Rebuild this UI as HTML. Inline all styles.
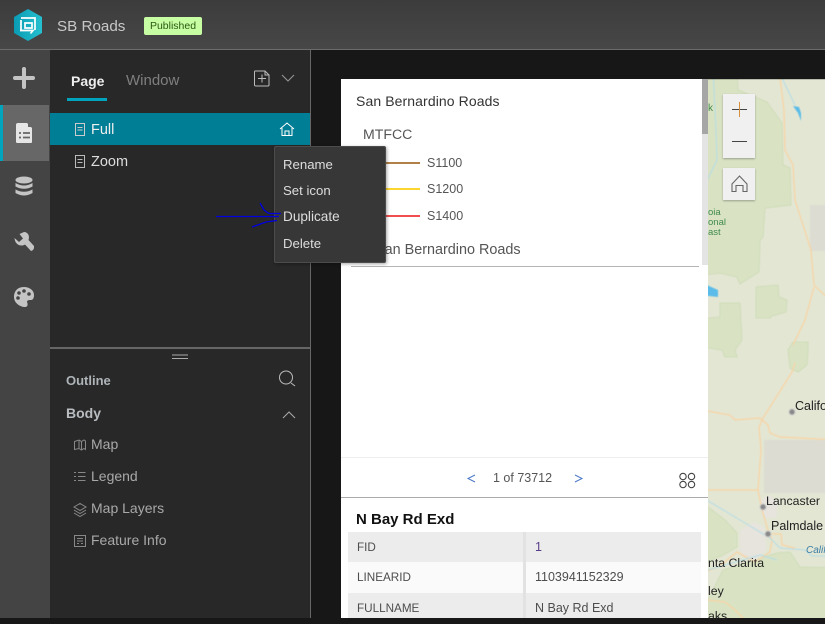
<!DOCTYPE html>
<html><head><meta charset="utf-8"><style>
html,body{margin:0;padding:0;background:#171717}
body{width:825px;height:618px;overflow:hidden;position:relative;font-family:"Liberation Sans",sans-serif}
div,span{position:absolute;white-space:nowrap}
svg{position:absolute;left:0;top:0}
.m{color:#ddd;font-size:13.2px;line-height:18px;left:283px}
.o{color:#a9a9a9;font-size:14px;line-height:18px;left:91px}
.k{color:#4d4d4d;font-size:11.700px;line-height:16px}
.v{color:#4d4d4d;font-size:12.500px;line-height:16px}
.ml{color:#222;font-size:12.300px;line-height:15px;filter:blur(.3px)}
</style></head><body>
<div style="left:0;top:0;width:825px;height:49px;background:linear-gradient(#3c3c3c,#474747)"></div>
<div style="left:0;top:49px;width:825px;height:1px;background:#6c6c6c"></div>
<div style="left:0;top:50px;width:50px;height:568px;background:#444"></div>
<div style="left:0;top:105px;width:49px;height:56px;background:#676767"></div>
<div style="left:0;top:105px;width:3px;height:56px;background:#00a5bd"></div>
<div style="left:50px;top:50px;width:260px;height:568px;background:#282828"></div>
<div style="left:310px;top:50px;width:1px;height:568px;background:#666"></div>
<div style="left:311px;top:50px;width:514px;height:568px;background:#171717"></div>

<!-- map -->
<div style="left:708px;top:79px;width:117px;height:539px;overflow:hidden">
<svg width="140" height="560" viewBox="700 79 140 560" style="left:-8px;top:0;filter:blur(.5px)">
<rect x="690" y="60" width="160" height="590" fill="#e3e6d3"/>
<g fill="#d9e3c4" stroke="#cfdcb8" stroke-width="1">
<path d="M690 70H737L738 90L767 102L782 123L783 165L790 168L791 205L765 208L763 237L760 240L759 272L740 284L737 277L720 273L690 277Z"/>
<path d="M756 287L778 285L779 297L787 300L786 312L772 316L770 318L756 318Z"/>
<path d="M690 320L720 317V303H740L742 340L735 350L737 357L725 357L722 350L690 345Z"/>
<path d="M793 342H808V350L807 365L798 372L790 368L788 350Z"/>
<path d="M690 495L708 507L725 520L737 533L737 547L723 555L690 570Z"/>
<path d="M690 640L708 600L723 570L777 553L790 552L800 567L840 568V640Z"/>
</g>
<rect x="810" y="205" width="30" height="46" fill="#dcdcd2"/>
<rect x="764" y="440" width="76" height="53" fill="#dcdcd2"/>
<path d="M740 530l14-8 10 5 3 22-12 12-15-8zM760 500l10-5 8 8-2 15-12 0z" fill="#e6e4dc"/>
<g fill="none" stroke="#f9d3a2" stroke-width="1.200">
<path d="M779 70L784 110L785 150L793 165L795 200L803 225L811 250L814 285L835 305"/>
<path d="M814 287L805 320L793 345"/>
<path d="M795 363L792 372L763 418L759 427L761 450L758 490L762 510L768 530L772 540L770 552L755 562L737 552L720 566L690 578"/>
<path d="M690 408L730 415L735 420L760 418L768 425L770 433L780 437L835 440"/>
<path d="M690 490H758"/>
<path d="M772 534H781L782 545L795 548"/>
<path d="M690 598L725 602L735 610L755 630"/>
</g>
<g fill="none" stroke="#b4dce8" stroke-width="1">
<path d="M778 70L795 105"/><path d="M713 70L716 130L717 160L700 195"/>
<path d="M690 490L740 520L770 538L780 548L805 550L812 556L835 556"/>
<path d="M690 575L760 555L777 560"/>
</g>
<path d="M793 106L799 107L801 113L801 121L798 113ZM700 282L718 290L718 297L700 295Z" fill="#5bbce9"/>
<circle cx="792" cy="412" r="3" fill="#888" stroke="#ccc"/><circle cx="763" cy="507" r="3" fill="#888" stroke="#ccc"/><circle cx="768" cy="534" r="3" fill="#888" stroke="#ccc"/>
</svg>
</div>
<div class="ml" style="left:795px;top:399px;font-size:12.500px">California</div>
<div class="ml" style="left:766px;top:494px">Lancaster</div>
<div class="ml" style="left:771px;top:519px;font-size:12.500px">Palmdale</div>
<div class="ml" style="left:806px;top:543px;font-size:10px;color:#3b7fa8;font-style:italic">Califo</div>
<div class="ml" style="left:708px;top:556px">nta Clarita</div>
<div class="ml" style="left:708px;top:584px">ley</div>
<div class="ml" style="left:708px;top:609px">aks</div>
<div class="ml" style="left:708px;top:101px;font-size:10px;color:#3f8a4a">k</div>
<div class="ml" style="left:708px;top:208px;font-size:9.500px;line-height:10px;color:#3f8a4a">oia<br>onal<br>ast</div>

<div style="left:723px;top:94px;width:32px;height:64px;background:#f0f0f0;box-shadow:0 1px 2px rgba(0,0,0,.3)"></div>
<div style="left:723px;top:168px;width:32px;height:32px;background:#f0f0f0;box-shadow:0 1px 2px rgba(0,0,0,.3)"></div>
<svg width="825" height="618" viewBox="0 0 825 618">
<path d="M732 109.500H747M732 141.500H747" stroke="#444" stroke-width="1"/>
<path d="M739.500 102V117" stroke="#d9903c" stroke-width="1"/>
<path d="M732 184L739.500 176L747 184V191.500H743V185.500H736V191.500H732Z" fill="none" stroke="#666" stroke-width="1.100"/>
</svg>

<!-- white page -->
<div style="left:341px;top:79px;width:367px;height:539px;background:#fff"></div>
<div style="left:702px;top:79px;width:6px;height:55px;background:#a6a6a6"></div>
<div style="left:702px;top:134px;width:6px;height:131px;background:#e4e4e4"></div>
<div style="left:356px;top:92px;font-size:14px;letter-spacing:.1px;line-height:18px;color:#333">San Bernardino Roads</div>
<div style="left:363px;top:125px;font-size:14.100px;line-height:18px;color:#555">MTFCC</div>
<div style="left:380px;top:162px;width:40px;height:2px;background:#b08048"></div>
<div style="left:380px;top:188px;width:40px;height:2px;background:#fcd52f"></div>
<div style="left:380px;top:215px;width:40px;height:2px;background:#ef4f4f"></div>
<div style="left:427px;top:154px;font-size:12.500px;line-height:18px;color:#555">S1100</div>
<div style="left:427px;top:180px;font-size:12.500px;line-height:18px;color:#555">S1200</div>
<div style="left:427px;top:207px;font-size:12.500px;line-height:18px;color:#555">S1400</div>
<div style="left:375px;top:241px;font-size:14.400px;line-height:18px;color:#555">San Bernardino Roads</div>
<div style="left:351px;top:266px;width:348px;height:1px;background:#b4b4b4"></div>
<div style="left:341px;top:457px;width:367px;height:1px;background:#eee"></div>
<div style="left:493px;top:469px;font-size:12.500px;line-height:18px;color:#555">1 of 73712</div>
<svg width="825" height="618" viewBox="0 0 825 618">
<path d="M475 475L468 478.500L475 482M575 475L582 478.500L575 482" fill="none" stroke="#4a78c8" stroke-width="1"/>
<g fill="none" stroke="#444" stroke-width="1.100"><circle cx="683" cy="476.500" r="3.200"/><circle cx="691.500" cy="476.500" r="3.200"/><circle cx="683" cy="484.500" r="3.200"/><circle cx="691.500" cy="484.500" r="3.200"/></g>
</svg>
<div style="left:341px;top:497px;width:367px;height:1px;background:#aaa"></div>
<div style="left:356px;top:510px;font-size:15px;font-weight:bold;line-height:19px;color:#111">N Bay Rd Exd</div>
<div style="left:348px;top:532px;width:353px;height:30px;background:#ececec"></div>
<div style="left:348px;top:562px;width:353px;height:31px;background:#fafafa"></div>
<div style="left:348px;top:593px;width:353px;height:25px;background:#ececec"></div>
<div style="left:523px;top:532px;width:3px;height:86px;background:#e2e2e2"></div>
<div class="k" style="left:357px;top:540px">FID</div><div class="v" style="left:535px;top:539px;color:#5a3d8a">1</div>
<div class="k" style="left:357px;top:570px">LINEARID</div><div class="v" style="left:535px;top:569px">1103941152329</div>
<div class="k" style="left:357px;top:601px">FULLNAME</div><div class="v" style="left:535px;top:600px">N Bay Rd Exd</div>

<!-- header -->
<svg width="825" height="618" viewBox="0 0 825 618">
<defs><linearGradient id="g" x1="0" x2="1"><stop offset="0" stop-color="#0a9cb4"/><stop offset="1" stop-color="#25c0d0"/></linearGradient></defs>
<path d="M28 9L42 17V33L28 41L14 33V17Z" fill="url(#g)"/>
<path d="M21 20V30M21 18H35V30M20 30.500H33L30.500 33.500M25 23H32V28H25Z" fill="none" stroke="#fff" stroke-width="1.700"/>
</svg>
<div style="left:57px;top:17px;font-size:15.200px;line-height:19px;color:#c8c8c8">SB Roads</div>
<div style="left:144px;top:17px;width:58px;height:18px;background:#c7fda3;border-radius:2px;color:#2b5a12;font-size:10.500px;line-height:18px;text-align:center">Published</div>

<!-- sidebar icons -->
<svg width="825" height="618" viewBox="0 0 825 618">
<path d="M24 69V87M15 78H33" stroke="#c4c4c4" stroke-width="4" stroke-linecap="round"/>
<path d="M18 123H27L32 128V142Q32 143 31 143H18Q16 143 16 142V125Q16 123 18 123Z" fill="#e6e6e6"/>
<path d="M28 122L33 127H28Z" fill="#676767"/>
<path d="M19 133H21M23 133H30M19 137.500H21M23 137.500H30" stroke="#676767" stroke-width="1.800"/>
<g fill="#c4c4c4"><ellipse cx="24" cy="180" rx="8.500" ry="3.500"/><path d="M15.500 183Q24 188 32.500 183V186.500Q24 191 15.500 186.500ZM15.500 189.500Q24 194 32.500 189.500V193Q24 198 15.500 193Z"/></g>
<path d="M14.500 238L19 242L23 238.500L19.500 234L24 232C28 232 30 236 28.500 240L34 246Q34.500 250 31 251L25 244.500C21 247 15 245 14.500 238Z" fill="#c4c4c4"/>
<path d="M24 287C16 287 14 293 14 297C14 303 20 307 25 307C28 307 28 304 27 302C27 300 29 300 31 300C33 300 34 298 34 295C34 290 29 287 24 287Z" fill="#c4c4c4"/>
<g fill="#444"><circle cx="19" cy="293" r="1.800"/><circle cx="24" cy="291" r="1.800"/><circle cx="29" cy="294" r="1.800"/><circle cx="18" cy="298" r="1.800"/></g>
</svg>

<!-- panel top -->
<div style="left:71px;top:72px;font-size:14px;font-weight:bold;line-height:18px;color:#eee">Page</div>
<div style="left:126px;top:72px;font-size:15px;line-height:18px;color:#7f7f7f">Window</div>
<div style="left:67px;top:98px;width:40px;height:3px;background:#00a5bd"></div>
<div style="left:50px;top:113px;width:260px;height:32px;background:#007e96"></div>
<div style="left:91px;top:121px;font-size:14.500px;line-height:18px;color:#eee">Full</div>
<div style="left:91px;top:153px;font-size:14.500px;line-height:18px;color:#ddd">Zoom</div>
<svg width="825" height="618" viewBox="0 0 825 618">
<path d="M255 71H265L269 75V85Q269 86 268 86H256Q254.500 86 254.500 85V72Q254.500 71 255 71ZM265 71V75H269M262 74.500V82.500M258 78.500H266" fill="none" stroke="#bbb" stroke-width="1"/>
<path d="M282 75L288 81L294 75" fill="none" stroke="#999" stroke-width="1"/>
<path d="M75.500 123.500H84.500V135.500H75.500ZM77.500 127.500H82.500M77.500 130H82.500" fill="none" stroke="#ccc" stroke-width="1"/>
<path d="M75.500 155.500H84.500V167.500H75.500ZM77.500 159.500H82.500M77.500 162.500H82.500" fill="none" stroke="#bbb" stroke-width="1"/>
<path d="M280 129L287 123L294 129M282 128V135.500H292V128M285 135.500V131H289V135.500" fill="none" stroke="#fff" stroke-width="1"/>
</svg>

<!-- outline -->
<div style="left:50px;top:347px;width:260px;height:2px;background:#666"></div>
<svg width="825" height="618" viewBox="0 0 825 618">
<path d="M172 355H188M172 358.500H188" stroke="#aaa" stroke-width="1"/>
<circle cx="286" cy="377.500" r="6.500" fill="none" stroke="#bbb" stroke-width="1"/>
<path d="M291 383L295 386" stroke="#bbb" stroke-width="1"/>
<path d="M283 418L289 412L295 418" fill="none" stroke="#aaa" stroke-width="1"/>
<g fill="none" stroke="#888" stroke-width="1">
<path d="M74.500 441.500L79 440L81.500 441.500L84 440L85.500 441V449.500L84 448.500L81.500 450L79 448.500L74.500 449.500ZM79 440V448.500M81.500 441.500V450"/>
<path d="M74 472.500H76M78 472.500H85.500M74 476.500H76M78 476.500H85.500M74 480.500H76M78 480.500H85.500"/>
<path d="M74 507L80 503.500L86 507L80 510.500ZM74 510L80 513.500L86 510M74 513L80 516.500L86 513"/>
<path d="M74.500 535.500H85.500V546.500H74.500ZM77 538.500H83M77 541H83M77 543.500H79M81 543.500H83"/>
</g>
</svg>
<div style="left:66px;top:372px;font-size:13px;font-weight:bold;line-height:18px;color:#aeb4b8">Outline</div>
<div style="left:66px;top:404px;font-size:14px;font-weight:bold;line-height:18px;color:#b9bdc0">Body</div>
<div class="o" style="top:435px">Map</div>
<div class="o" style="top:467px">Legend</div>
<div class="o" style="top:499px">Map Layers</div>
<div class="o" style="top:531px">Feature Info</div>

<!-- context menu -->
<div style="left:274px;top:146px;width:110px;height:115px;background:#373737;border:1px solid #4c4c4c;border-radius:2px;box-shadow:1px 1px 3px rgba(0,0,0,.35)"></div>
<div class="m" style="top:156px">Rename</div>
<div class="m" style="top:182px">Set icon</div>
<div class="m" style="top:208px;font-size:13.600px">Duplicate</div>
<div class="m" style="top:235px">Delete</div>
<svg width="825" height="618" viewBox="0 0 825 618">
<g fill="none" stroke="#0000e0" stroke-width="1.300"><path d="M216 216.500H279"/><path d="M260 203L264 210L269 213.500H281"/><path d="M252 227L259 224.500L266 222L277 220.500"/></g>
</svg>
</body></html>
